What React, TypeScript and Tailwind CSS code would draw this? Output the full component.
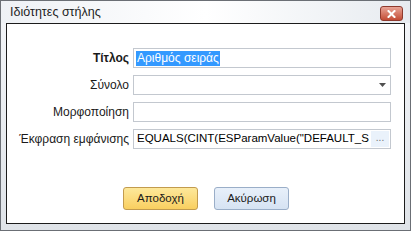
export default function App() {
  const font = { fontFamily: '"Liberation Sans", Arial, sans-serif' };
  const rows = [
    { label: "Τίτλος", bold: true },
    { label: "Σύνολο" },
    { label: "Μορφοποίηση" },
    { label: "Έκφραση εμφάνισης" },
  ];

  return (
    <div
      className="w-[411px] h-[231px] flex flex-col border border-[#6b6f75] bg-gradient-to-b from-[#f4f6f9] to-[#dfe3e8] text-[12px] text-black"
      style={font}
    >
      {/* title bar */}
      <div className="h-[22px] flex items-center pl-[9px] pr-[7px] bg-gradient-to-r from-[#eef1f5] via-[#ffffff] to-[#e7ebf0]">
        <span className="text-[12.5px] text-[#1e1e1e]">Ιδιότητες στήλης</span>
        <div className="ml-auto mt-[3px] w-[23px] h-[15px] rounded-[3px] border border-[#8e3a2e] bg-gradient-to-b from-[#e8a497] to-[#c24a34] flex items-center justify-center">
          <svg width="9" height="8" viewBox="0 0 9 8">
            <path d="M1.5 1 L7.5 7 M7.5 1 L1.5 7" stroke="#fff" strokeWidth="2" strokeLinecap="square" />
          </svg>
        </div>
      </div>

      {/* client area */}
      <div className="ml-[5px] mr-[5px] h-[201px] border border-[#1c1c1c] bg-white flex flex-col">
        <div className="pt-[24px] flex flex-col gap-[7px]">
          {rows.map((r, i) => (
            <div key={i} className="flex items-center h-[20px]">
              <div className={`w-[122px] text-right text-[#1a1a1a] ${r.bold ? "font-bold" : ""}`}>{r.label}</div>
              <div className="ml-[4px] w-[258px] h-[20px] border border-[#c3c8cf] flex items-center relative">
                {i === 0 && (
                  <span className="ml-[2px] px-[1px] bg-[#3399ff] text-white leading-[15px]">Αριθμός σειράς</span>
                )}
                {i === 1 && (
                  <svg className="absolute right-[4px] top-[7px]" width="7" height="4" viewBox="0 0 7 4">
                    <path d="M0 0 H7 L3.5 4 Z" fill="#505050" />
                  </svg>
                )}
                {i === 3 && (
                  <>
                    <span className="ml-[3px] text-[11.5px] whitespace-nowrap overflow-hidden w-[232px]">
                      EQUALS(CINT(ESParamValue("DEFAULT_S
                    </span>
                    <div className="ml-auto mr-[1px] w-[18px] h-[16px] bg-[#eaf2fb] text-[#707070] text-[10px] flex items-end justify-center pb-[2px]">
                      ...
                    </div>
                  </>
                )}
              </div>
            </div>
          ))}
        </div>

        <div className="mt-[38px] ml-[116px] flex gap-[16px]">
          <button className="w-[75px] h-[23px] rounded-[3px] border border-[#c29b4e] bg-gradient-to-b from-[#fde89a] to-[#f9cf5f] text-[11.5px] text-[#1a1a1a]">
            Αποδοχή
          </button>
          <button className="w-[75px] h-[23px] rounded-[3px] border border-[#9aaec8] bg-gradient-to-b from-[#e8f0fa] to-[#d6e3f3] text-[11.5px] text-[#1a1a1a]">
            Ακύρωση
          </button>
        </div>
      </div>
    </div>
  );
}
